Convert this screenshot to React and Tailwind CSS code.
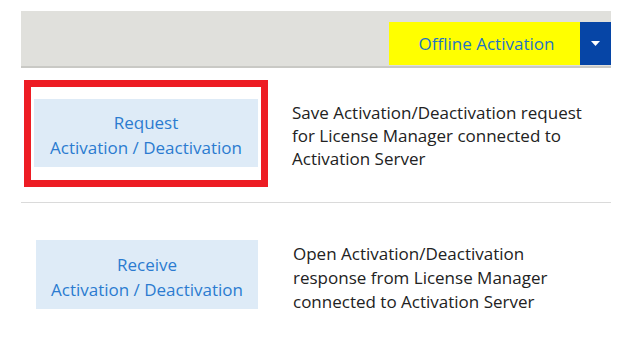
import React from "react";

const font = { fontFamily: '"Open Sans", "Noto Sans", "Liberation Sans", sans-serif' };

function ActionButton({ title, className = "" }) {
  return (
    <div
      className={`flex flex-col items-center justify-center bg-[#deebf7] text-[17px] leading-[25px] text-[#2b7bd0] ${className}`}
    >
      <span>{title}</span>
      <span>Activation / Deactivation</span>
    </div>
  );
}

export default function App() {
  return (
    <div className="h-[338px] w-[630px] overflow-hidden bg-white pl-[21px] pr-[19px] pt-[11px]" style={font}>
      {/* toolbar */}
      <div className="flex h-[57px] items-start justify-end border-b-[2px] border-[#c9c9c5] bg-[#e0e0dc] pt-[11px]">
        <div className="flex h-[43px] w-[191px] items-center justify-center bg-[#ffff00] pl-[4px] text-[17px] text-[#1f74c4]">
          Offline Activation
        </div>
        <div className="flex h-[43px] w-[31px] items-center justify-center bg-[#0645a6]">
          <svg width="9" height="5" viewBox="0 0 9 5">
            <polygon points="0,0 9,0 4.5,5" fill="#ffffff" />
          </svg>
        </div>
      </div>

      {/* request row */}
      <div className="flex h-[135px] items-start border-b border-[#dadada]">
        <div className="ml-[3px] mt-[12px] h-[107px] w-[244px] border-[7px] border-[#ed1c24] px-[3px] pt-[12px]">
          <ActionButton title="Request" className="h-[68px] w-[224px] pt-[4px]" />
        </div>
        <p className="ml-[24px] mt-[33px] text-[17px] leading-[23px] text-[#222]">
          Save Activation/Deactivation request
          <br />
          for License Manager connected to
          <br />
          Activation Server
        </p>
      </div>

      {/* receive row */}
      <div className="flex items-start">
        <ActionButton title="Receive" className="ml-[15px] mt-[37px] h-[69px] w-[222px] pt-[5px]" />
        <p className="ml-[35px] mt-[39px] text-[17px] leading-[24px] text-[#222]">
          Open Activation/Deactivation
          <br />
          response from License Manager
          <br />
          connected to Activation Server
        </p>
      </div>
    </div>
  );
}
